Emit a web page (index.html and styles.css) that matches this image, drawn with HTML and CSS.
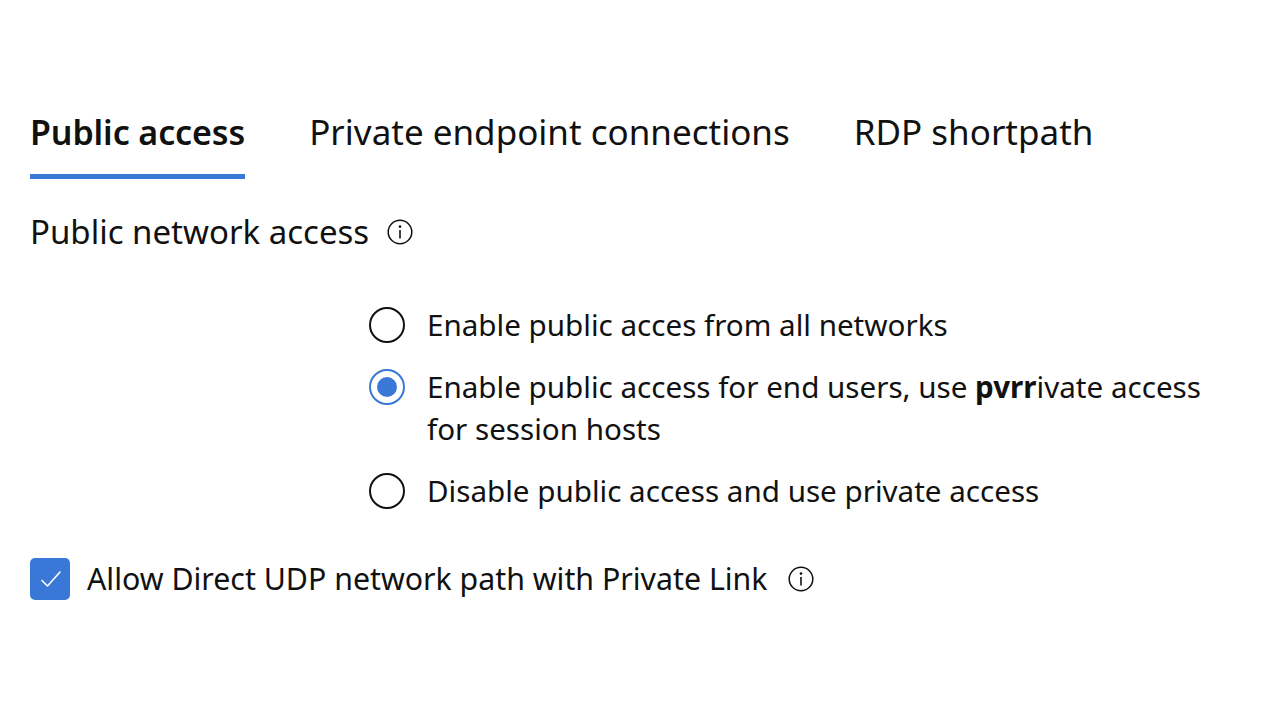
FILE: index.html
```html
<!DOCTYPE html>
<html lang="en">
<head>
<meta charset="utf-8">
<title>Networking</title>
<link rel="stylesheet" href="styles.css">
</head>
<body>
<main class="page">
  <nav class="tabs">
    <a class="tab active">Public access</a>
    <a class="tab">Private endpoint connections</a>
    <a class="tab">RDP shortpath</a>
  </nav>

  <div class="field-label">
    <span>Public network access</span>
    <svg class="info" viewBox="0 0 26 26" width="26" height="26" aria-hidden="true">
      <circle cx="13" cy="13" r="11.8" fill="none" stroke="#111" stroke-width="1.5"/>
      <circle cx="13" cy="7.6" r="1.3" fill="#111"/>
      <path d="M13 11v8.5" stroke="#111" stroke-width="1.6" fill="none"/>
    </svg>
  </div>

  <div class="options">
    <label class="option">
      <span class="radio"></span>
      <span class="option-text">Enable public acces from all networks</span>
    </label>
    <label class="option">
      <span class="radio checked"></span>
      <span class="option-text">Enable public access for end users, use <b>pvrr</b>ivate access for session hosts</span>
    </label>
    <label class="option">
      <span class="radio"></span>
      <span class="option-text">Disable public access and use private access</span>
    </label>
  </div>

  <label class="check-row">
    <span class="checkbox">
      <svg viewBox="0 0 40 40" width="40" height="40" aria-hidden="true">
        <path d="M12 21.5l5.5 5.5L30 13" fill="none" stroke="#fff" stroke-width="1.6" stroke-linecap="round" stroke-linejoin="round"/>
      </svg>
    </span>
    <span class="check-text">Allow Direct UDP network path with Private Link</span>
    <svg class="info" viewBox="0 0 26 26" width="26" height="26" aria-hidden="true">
      <circle cx="13" cy="13" r="11.8" fill="none" stroke="#111" stroke-width="1.5"/>
      <circle cx="13" cy="7.6" r="1.3" fill="#111"/>
      <path d="M13 11v8.5" stroke="#111" stroke-width="1.6" fill="none"/>
    </svg>
  </label>
</main>
</body>
</html>
```

FILE: styles.css
```css
html, body {
  margin: 0;
  background: #fff;
}

body {
  font-family: "Noto Sans", "Open Sans", sans-serif;
  color: #111;
}

.page {
  padding: 108px 30px 0 30px;
}

.tabs {
  display: flex;
  gap: 64px;
}

.tab {
  font-size: 35px;
  line-height: 48px;
  padding-bottom: 18px;
  border-bottom: 5px solid transparent;
  color: #111;
}

.tab.active {
  font-size: 34px;
  font-weight: 600;
  letter-spacing: -0.1px;
  border-bottom-color: #3a78d8;
}

.field-label {
  display: flex;
  align-items: center;
  gap: 18px;
  margin-top: 31px;
  font-size: 33px;
  line-height: 44px;
}

.options {
  margin-top: 50px;
  padding-left: 339px;
  width: 850px;
  display: flex;
  flex-direction: column;
  gap: 20px;
}

.option {
  display: flex;
  align-items: flex-start;
  gap: 22px;
  font-size: 29.6px;
  line-height: 42px;
}

.radio {
  flex: none;
  width: 36px;
  height: 36px;
  margin-top: 3px;
  box-sizing: border-box;
  border: 2px solid #111;
  border-radius: 50%;
  display: flex;
  align-items: center;
  justify-content: center;
}

.radio.checked {
  border-color: #3a78d8;
}

.radio.checked::after {
  content: "";
  width: 20px;
  height: 20px;
  border-radius: 50%;
  background: #3a78d8;
}

.option-text b {
  font-weight: 700;
}

.check-row {
  display: flex;
  align-items: center;
  margin-top: 46px;
  font-size: 30.3px;
  line-height: 42px;
}

.checkbox {
  flex: none;
  width: 40px;
  height: 42px;
  border-radius: 5px;
  background: #3a78d8;
  display: flex;
  align-items: center;
  justify-content: center;
  margin-right: 17px;
}

.check-text {
  margin-right: 20px;
}

.info {
  flex: none;
}
```
